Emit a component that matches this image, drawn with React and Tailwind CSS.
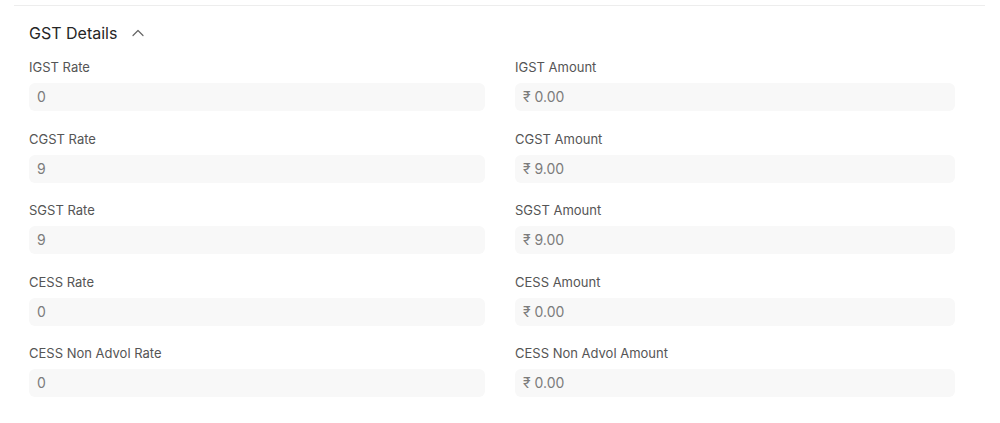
const fields = [
  ["IGST Rate", "0", "IGST Amount", "₹ 0.00"],
  ["CGST Rate", "9", "CGST Amount", "₹ 9.00"],
  ["SGST Rate", "9", "SGST Amount", "₹ 9.00"],
  ["CESS Rate", "0", "CESS Amount", "₹ 0.00"],
  ["CESS Non Advol Rate", "0", "CESS Non Advol Amount", "₹ 0.00"],
];

function Field({ label, value }) {
  return (
    <div className="flex flex-col">
      <div className="h-4 text-[13px] leading-4 text-[#555555]">{label}</div>
      <div className="mt-2 flex h-7 items-center rounded-md bg-[#f8f8f8] px-2 text-sm text-[#7c7c7c]">
        {value}
      </div>
    </div>
  );
}

export default function App() {
  return (
    <div
      className="h-[423px] w-[1000px] bg-white pt-[5px]"
      style={{ fontFamily: "Inter, 'Noto Sans', sans-serif" }}
    >
      <div className="mx-[14px] w-[971px] border-t border-[#ededed] pl-[15px]">
        <div className="mt-[15px] flex h-6 items-center gap-[15px]">
          <span className="text-base text-[#262626]">GST Details</span>
          <svg width="12" height="8" viewBox="0 0 12 8" fill="none">
            <path d="M1 6.5 6 1.5l5 5" stroke="#666666" strokeWidth="1.2" strokeLinecap="round" strokeLinejoin="round" />
          </svg>
        </div>
        <div className="mt-[14px] grid grid-cols-[456px_440px] gap-x-[30px] gap-y-[19.6px]">
          {fields.map(([l1, v1, l2, v2]) => (
            <>
              <Field key={l1} label={l1} value={v1} />
              <Field key={l2} label={l2} value={v2} />
            </>
          ))}
        </div>
      </div>
    </div>
  );
}
